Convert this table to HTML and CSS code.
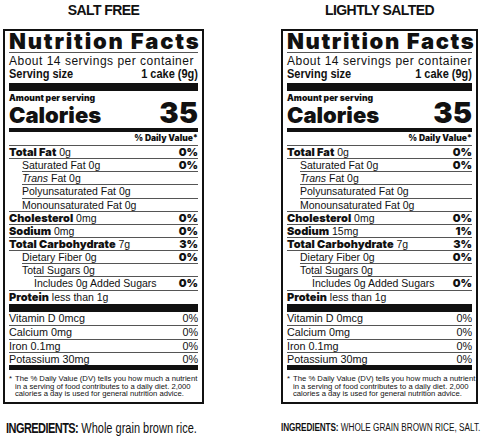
FILE: index.html
```html
<!DOCTYPE html>
<html>
<head>
<meta charset="utf-8">
<link rel="stylesheet" href="styles.css">
</head>
<body>
<div class="page">
  <section class="col col-left">
    <h2 class="variant">SALT FREE</h2>
    <div class="label">
      <div class="nf-title">Nutrition Facts</div>
      <div class="servings">About 14 servings per container</div>
      <div class="size"><span>Serving size</span><span>1 cake (9g)</span></div>
      <div class="bar bar-thick"></div>
      <div class="amount">Amount per serving</div>
      <div class="cal"><span class="cal-l">Calories</span><span class="cal-v">35</span></div>
      <div class="bar bar-med"></div>
      <div class="dv">% Daily Value*</div>
      <div class="row"><span><b>Total Fat</b> 0g</span><b>0%</b></div>
      <div class="row sub"><span>Saturated Fat 0g</span><b>0%</b></div>
      <div class="row sub ind1"><span><i>Trans</i> Fat 0g</span></div>
      <div class="row sub ind1"><span>Polyunsaturated Fat 0g</span></div>
      <div class="row sub ind1"><span>Monounsaturated Fat 0g</span></div>
      <div class="row"><span><b>Cholesterol</b> 0mg</span><b>0%</b></div>
      <div class="row"><span><b>Sodium</b> 0mg</span><b>0%</b></div>
      <div class="row"><span><b>Total Carbohydrate</b> 7g</span><b>3%</b></div>
      <div class="row sub"><span>Dietary Fiber 0g</span><b>0%</b></div>
      <div class="row sub ind1"><span>Total Sugars 0g</span></div>
      <div class="row sub2 ind2"><span>Includes 0g Added Sugars</span><b>0%</b></div>
      <div class="row protein"><span><b>Protein</b> less than 1g</span></div>
      <div class="bar bar-thick bar-flush"></div>
      <div class="vrow first"><span>Vitamin D 0mcg</span><span>0%</span></div>
      <div class="vrow"><span>Calcium 0mg</span><span>0%</span></div>
      <div class="vrow"><span>Iron 0.1mg</span><span>0%</span></div>
      <div class="vrow"><span>Potassium 30mg</span><span>0%</span></div>
      <div class="bar bar-med2"></div>
      <div class="foot"><span class="star">*</span><span>The % Daily Value (DV) tells you how much a nutrient<br>in a serving of food contributes to a daily diet. 2,000<br>calories a day is used for general nutrition advice.</span></div>
    </div>
    <p class="ingr ingr-left"><span class="ingr-in"><b>INGREDIENTS:</b> Whole grain brown rice.</span></p>
  </section>

  <section class="col col-right">
    <h2 class="variant">LIGHTLY SALTED</h2>
    <div class="label">
      <div class="nf-title">Nutrition Facts</div>
      <div class="servings">About 14 servings per container</div>
      <div class="size"><span>Serving size</span><span>1 cake (9g)</span></div>
      <div class="bar bar-thick"></div>
      <div class="amount">Amount per serving</div>
      <div class="cal"><span class="cal-l">Calories</span><span class="cal-v">35</span></div>
      <div class="bar bar-med"></div>
      <div class="dv">% Daily Value*</div>
      <div class="row"><span><b>Total Fat</b> 0g</span><b>0%</b></div>
      <div class="row sub"><span>Saturated Fat 0g</span><b>0%</b></div>
      <div class="row sub ind1"><span><i>Trans</i> Fat 0g</span></div>
      <div class="row sub ind1"><span>Polyunsaturated Fat 0g</span></div>
      <div class="row sub ind1"><span>Monounsaturated Fat 0g</span></div>
      <div class="row"><span><b>Cholesterol</b> 0mg</span><b>0%</b></div>
      <div class="row"><span><b>Sodium</b> 15mg</span><b>1%</b></div>
      <div class="row"><span><b>Total Carbohydrate</b> 7g</span><b>3%</b></div>
      <div class="row sub"><span>Dietary Fiber 0g</span><b>0%</b></div>
      <div class="row sub ind1"><span>Total Sugars 0g</span></div>
      <div class="row sub2 ind2"><span>Includes 0g Added Sugars</span><b>0%</b></div>
      <div class="row protein"><span><b>Protein</b> less than 1g</span></div>
      <div class="bar bar-thick bar-flush"></div>
      <div class="vrow first"><span>Vitamin D 0mcg</span><span>0%</span></div>
      <div class="vrow"><span>Calcium 0mg</span><span>0%</span></div>
      <div class="vrow"><span>Iron 0.1mg</span><span>0%</span></div>
      <div class="vrow"><span>Potassium 30mg</span><span>0%</span></div>
      <div class="bar bar-med2"></div>
      <div class="foot"><span class="star">*</span><span>The % Daily Value (DV) tells you how much a nutrient<br>in a serving of food contributes to a daily diet. 2,000<br>calories a day is used for general nutrition advice.</span></div>
    </div>
    <p class="ingr ingr-right"><span class="ingr-in"><b>INGREDIENTS:</b> WHOLE GRAIN BROWN RICE, SALT.</span></p>
  </section>
</div>
</body>
</html>
```

FILE: styles.css
```css
* { box-sizing: border-box; }

body {
  margin: 0;
  background: #fff;
  color: #111;
  font-family: "Liberation Sans", Arial, sans-serif;
}

.page {
  display: flex;
  padding-left: 3px;
  gap: 77px;
}

.col-left { width: 201px; }
.col-right { width: 197px; }

.variant {
  margin: 0;
  height: 29px;
  padding-top: 2px;
  font: bold 14px/16px "Liberation Sans", Arial, sans-serif;
  letter-spacing: -0.6px;
  text-align: center;
}

.label {
  border: 2px solid #111;
  padding: 0 4px 4px 4px;
}

.nf-title {
  font: 900 22px/20px "Inter", sans-serif;
  letter-spacing: 1.8px;
  white-space: nowrap;
  padding-bottom: 1px;
  border-bottom: 1px solid #555;
}
.col-right .nf-title { letter-spacing: 1.6px; }

.servings {
  margin-top: 2px;
  font-size: 12px;
  line-height: 13px;
  letter-spacing: 0.5px;
  white-space: nowrap;
}

.size {
  display: flex;
  justify-content: space-between;
  font: bold 11px/13px "Liberation Sans", Arial, sans-serif;
}
.size span {
  display: inline-block;
  transform: scaleY(1.1);
}

.bar { background: #111; }
.bar-thick { height: 8px; margin-top: 2px; }
.bar-flush { margin-top: 0; }
.bar-med { height: 4px; margin-top: 2.5px; }
.bar-med2 { height: 5px; }

.amount {
  margin-top: 3px;
  font: 900 8.6px/9px "Inter", sans-serif;
}

.cal {
  display: flex;
  justify-content: space-between;
  align-items: baseline;
  line-height: 20px;
}
.cal-l { font: 900 22px/20px "Inter", sans-serif; }
.cal-v { font: 900 29px/20px "Inter", sans-serif; }

.dv {
  margin-top: 2.5px;
  margin-bottom: 2px;
  text-align: right;
  font: 900 8.5px/9px "Inter", sans-serif;
}

.row, .vrow {
  display: flex;
  justify-content: space-between;
  border-top: 1px solid #555;
  white-space: nowrap;
}

.row {
  height: 13.15px;
  font-size: 10.5px;
  line-height: 12px;
}
.row b { font-family: "Inter", sans-serif; font-weight: 900; font-size: 11px; }
.row.ind1 { margin-left: 13px; }
.row.sub span { padding-left: 13px; }
.row.sub.ind1 span { padding-left: 0; }
.row.ind2 { margin-left: 25px; }
.row.protein { height: 14.3px; }

.vrow {
  height: 13.4px;
  font-size: 10.8px;
  line-height: 13px;
}
.vrow.first { border-top: none; }

.foot {
  display: flex;
  gap: 3px;
  margin-top: 5px;
  font-size: 7.7px;
  line-height: 7.4px;
  white-space: nowrap;
}
.star { flex: none; }

.ingr {
  margin: 16px 0 0;
  line-height: 16px;
  white-space: nowrap;
}
.ingr-in {
  display: inline-block;
  transform: scaleY(1.27);
}
.ingr-left { padding-left: 3px; font-size: 11px; }
.ingr-left b { letter-spacing: -0.55px; }
.ingr-right { font-size: 8.2px; }
.ingr-right b { letter-spacing: -0.1px; }
```
